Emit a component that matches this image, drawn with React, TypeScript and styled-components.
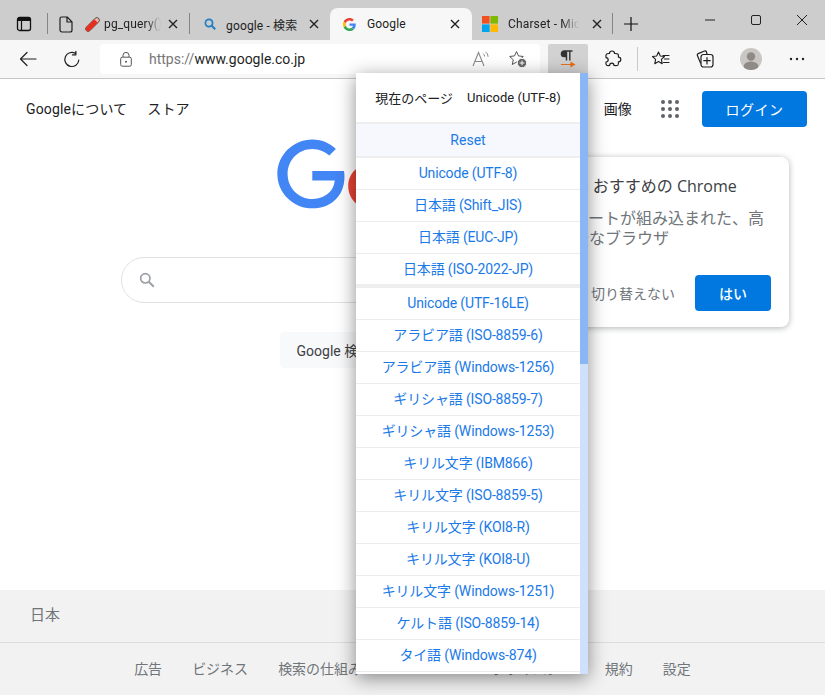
import React from "react";
import styled, { createGlobalStyle } from "styled-components";

const GlobalStyle = createGlobalStyle`
    html, body {
        margin: 0;
        padding: 0;
        background: #fff;
    }
    body {
        font-family: Roboto, "Noto Sans CJK JP", sans-serif;
        overflow: hidden;
    }
`;

const Shell = styled.div`
    position: relative;
    width: 825px;
    height: 695px;
    overflow: hidden;
    display: flex;
    flex-direction: column;
`;

/* tab strip */
const TabStrip = styled.div`
    height: 40px;
    flex: none;
    display: flex;
    align-items: flex-end;
    background: #cdcdcd;
`;
const StripCell = styled.div<{ $w: number }>`
    width: ${(p) => p.$w}px;
    height: 32px;
    flex: none;
    display: flex;
    align-items: center;
    justify-content: center;
`;
const StripDivider = styled.div`
    width: 1px;
    height: 21px;
    margin-bottom: 6px;
    flex: none;
    background: #858585;
`;
const Tab = styled.div<{ $w: number; $pl: number; $pr: number; $gap: number; $active?: boolean }>`
    width: ${(p) => p.$w}px;
    height: 32px;
    flex: none;
    box-sizing: border-box;
    display: flex;
    align-items: center;
    gap: ${(p) => p.$gap}px;
    padding: 0 ${(p) => p.$pr}px 0 ${(p) => p.$pl}px;
    border-radius: 8px 8px 0 0;
    background: ${(p) => (p.$active ? "#f7f7f7" : "transparent")};
`;
const Favicon = styled.span`
    width: 16px;
    height: 16px;
    flex: none;
    display: flex;
    align-items: center;
    justify-content: center;
`;
const TabTitle = styled.span<{ $fade?: boolean }>`
    flex: 1;
    min-width: 0;
    overflow: hidden;
    white-space: nowrap;
    font-size: 12px;
    letter-spacing: 0.15px;
    color: #222;
    ${(p) =>
        p.$fade &&
        `-webkit-mask-image: linear-gradient(to right, #000 75%, transparent 100%);
         mask-image: linear-gradient(to right, #000 75%, transparent 100%);`}
`;
const CloseSlot = styled.span`
    width: 16px;
    height: 16px;
    flex: none;
    display: flex;
    align-items: center;
    justify-content: center;
`;
const PlusCell = styled.div`
    width: 36px;
    height: 32px;
    flex: none;
    display: flex;
    align-items: center;
    justify-content: center;
`;
const WindowControls = styled.div`
    margin-left: auto;
    display: flex;
    align-self: flex-start;
`;
const WindowButton = styled.div`
    width: 46px;
    height: 40px;
    display: flex;
    align-items: center;
    justify-content: center;
`;

/* toolbar */
const Toolbar = styled.div`
    height: 39px;
    flex: none;
    box-sizing: border-box;
    display: flex;
    align-items: center;
    padding-left: 8px;
    background: #f7f7f7;
    border-bottom: 1px solid #c6c6c6;
`;
const ToolButton = styled.div<{ $ml?: number }>`
    width: 40px;
    height: 30px;
    flex: none;
    margin-left: ${(p) => p.$ml ?? 0}px;
    display: flex;
    align-items: center;
    justify-content: center;
`;
const ActiveToolButton = styled(ToolButton)`
    background: #d2d2d2;
    border-radius: 2px 2px 0 0;
`;
const ToolDivider = styled.div`
    width: 1px;
    height: 24px;
    flex: none;
    margin-left: 4px;
    background: #c9c9c9;
`;
const AddressBar = styled.div`
    width: 440px;
    height: 30px;
    flex: none;
    box-sizing: border-box;
    margin-left: 8px;
    padding: 0 13px 0 20px;
    display: flex;
    align-items: center;
    border-radius: 4px;
    background: #fff;
`;
const Url = styled.div`
    margin-left: 17px;
    font-size: 14px;
    color: #1f1f1f;
    flex: 1;
    span {
        color: #767676;
    }
`;
const AddressIcons = styled.div`
    display: flex;
    align-items: center;
    gap: 19px;
`;

/* google page */
const Page = styled.main`
    flex: 1;
    min-height: 0;
    display: flex;
    flex-direction: column;
    background: #fff;
`;
const TopNav = styled.nav`
    display: flex;
    align-items: center;
    justify-content: space-between;
    padding: 12px 18px 0 26px;
`;
const NavGroup = styled.div`
    display: flex;
    align-items: center;
    gap: 20px;
`;
const NavRight = styled(NavGroup)`
    gap: 15px;
`;
const NavLink = styled.a`
    font-size: 14px;
    letter-spacing: 0.15px;
    padding-bottom: 2px;
    color: #202124;
`;
const AppsButton = styled.div`
    margin: 0 8px 0 14px;
    display: flex;
`;
const LoginButton = styled.button`
    width: 105px;
    height: 36px;
    border: 0;
    border-radius: 4px;
    background: #0078e0;
    color: #fff;
    font: inherit;
    font-size: 14px;
    letter-spacing: 0.5px;
`;
const Logo = styled.div`
    align-self: flex-start;
    margin: 12px 0 0 277px;
    height: 92px;
    display: flex;
`;
const SearchBox = styled.div`
    width: 584px;
    height: 46px;
    box-sizing: border-box;
    margin: 26px 0 0 121px;
    padding-left: 17px;
    display: flex;
    align-items: center;
    border: 1px solid #dfe1e5;
    border-radius: 23px;
    background: #fff;
`;
const SearchButtons = styled.div`
    margin-top: 29px;
    display: flex;
    justify-content: center;
    gap: 16px;
`;
const SearchButton = styled.button`
    height: 36px;
    padding: 0 17px;
    border: 0;
    border-radius: 4px;
    background: #f8f9fa;
    color: #3c4043;
    font: inherit;
    font-size: 14px;
`;
const Footer = styled.footer`
    margin-top: auto;
    height: 105px;
    background: #f2f2f2;
    color: #70757a;
    font-size: 14px;
`;
const FooterCountry = styled.div`
    height: 53px;
    box-sizing: border-box;
    padding: 0 0 5px 30px;
    display: flex;
    align-items: center;
    font-size: 15px;
    border-bottom: 1px solid #dadce0;
`;
const FooterLinks = styled.div`
    padding-top: 15px;
    display: flex;
    justify-content: center;
    gap: 129px;
`;
const FooterGroup = styled.div`
    display: flex;
    gap: 30px;
`;

/* chrome promo */
const PromoCard = styled.aside`
    position: absolute;
    top: 157px;
    left: 507px;
    width: 282px;
    height: 170px;
    box-sizing: border-box;
    padding: 19px 18px 16px 18px;
    display: flex;
    flex-direction: column;
    background: #fff;
    border-radius: 8px;
    box-shadow: 0 1px 6px rgba(60, 64, 67, 0.4);
`;
const PromoTitle = styled.div`
    padding-left: 11px;
    font-family: "Open Sans", "Noto Sans CJK JP", sans-serif;
    font-size: 16px;
    line-height: 20px;
    white-space: nowrap;
    color: #3c4043;
`;
const PromoBody = styled.div`
    margin-top: 13px;
    font-size: 16px;
    line-height: 20px;
    color: #70757a;
    white-space: nowrap;
`;
const PromoActions = styled.div`
    margin-top: auto;
    display: flex;
    align-items: center;
    justify-content: flex-end;
    gap: 20px;
    font-size: 14px;
    color: #70757a;
`;
const PromoYes = styled.button`
    width: 76px;
    height: 36px;
    border: 0;
    border-radius: 4px;
    background: #0078e0;
    color: #fff;
    font: inherit;
    font-size: 14px;
    font-weight: 500;
`;

/* charset menu */
const CharsetMenu = styled.div`
    position: absolute;
    top: 73px;
    left: 356px;
    width: 232px;
    height: 601px;
    display: flex;
    overflow: hidden;
    background: #fff;
    box-shadow: 0 4px 18px rgba(0, 0, 0, 0.45);
`;
const MenuList = styled.div`
    flex: 1;
    min-width: 0;
    font-size: 14px;
    letter-spacing: -0.15px;
    color: #1a7ae8;
    text-align: center;
`;
const MenuHeader = styled.div`
    height: 49px;
    display: flex;
    align-items: center;
    justify-content: center;
    gap: 14px;
    font-size: 13px;
    letter-spacing: 0;
    color: #202124;
`;
const MenuRow = styled.div<{ $last?: boolean; $reset?: boolean }>`
    height: ${(p) => (p.$last ? 30 : 31)}px;
    line-height: 31px;
    border-bottom: ${(p) => (p.$last || p.$reset ? "0" : "1px solid #ececec")};
    background: ${(p) => (p.$reset ? "#f6f8fd" : "transparent")};
    ${(p) => p.$reset && "height: 32px; line-height: 32px; letter-spacing: 0;"}
`;
const MenuSeparator = styled.div<{ $h: number }>`
    height: ${(p) => p.$h}px;
    background: #eeeeee;
`;
const ScrollTrack = styled.div`
    width: 8px;
    flex: none;
    background: #cfe0fb;
`;
const ScrollThumb = styled.div`
    height: 291px;
    background: #8ab6f6;
`;

const Stroke = { fill: "none", stroke: "#1f1f1f", strokeWidth: 1.2, strokeLinecap: "round", strokeLinejoin: "round" } as const;

const CloseIcon = () => (
    <svg width="10" height="10" viewBox="0 0 10 10">
        <path d="M1 1l8 8M9 1L1 9" stroke="#222" strokeWidth="1.4" fill="none" />
    </svg>
);

const GoogleG = () => (
    <svg width="13" height="13" viewBox="0 0 48 48">
        <path fill="#EA4335" d="M24 9.5c3.54 0 6.71 1.22 9.21 3.6l6.85-6.85C35.9 2.38 30.47 0 24 0 14.62 0 6.51 5.38 2.56 13.22l7.98 6.19C12.43 13.72 17.74 9.5 24 9.5z" />
        <path fill="#4285F4" d="M46.98 24.55c0-1.57-.15-3.09-.38-4.55H24v9.02h12.94c-.58 2.96-2.26 5.48-4.78 7.18l7.73 6c4.51-4.18 7.09-10.36 7.09-17.65z" />
        <path fill="#FBBC05" d="M10.53 28.59c-.48-1.45-.76-2.99-.76-4.59s.27-3.14.76-4.59l-7.98-6.19C.92 16.46 0 20.12 0 24c0 3.88.92 7.54 2.56 10.78l7.97-6.19z" />
        <path fill="#34A853" d="M24 48c6.48 0 11.93-2.13 15.89-5.81l-7.73-6c-2.15 1.45-4.92 2.3-8.16 2.3-6.26 0-11.57-4.22-13.47-9.91l-7.98 6.19C6.51 42.62 14.62 48 24 48z" />
    </svg>
);

const GoogleLogo = () => (
    <svg width="272" height="92" viewBox="0 0 272 92">
        <path fill="#EA4335" d="M115.75 47.18c0 12.77-9.99 22.18-22.25 22.18s-22.25-9.41-22.25-22.18C71.25 34.32 81.24 25 93.5 25s22.25 9.32 22.25 22.18zm-9.74 0c0-7.98-5.79-13.44-12.51-13.44S80.99 39.2 80.99 47.18c0 7.9 5.79 13.44 12.51 13.44s12.51-5.55 12.51-13.44z" />
        <path fill="#4285F4" d="M35.29 41.41V32H67c.31 1.64.47 3.58.47 5.68 0 7.06-1.93 15.79-8.15 22.01-6.05 6.3-13.78 9.66-24.02 9.66C16.32 69.35.36 53.89.36 34.91.36 15.93 16.32.47 35.3.47c10.5 0 17.98 4.12 23.6 9.49l-6.64 6.64c-4.03-3.78-9.49-6.72-16.97-6.72-13.86 0-24.7 11.17-24.7 25.03 0 13.86 10.84 25.03 24.7 25.03 8.99 0 14.11-3.61 17.39-6.89 2.66-2.66 4.41-6.46 5.1-11.65l-22.49.01z" />
    </svg>
);

const AppsIcon = () => (
    <svg width="18" height="18" viewBox="0 0 18 18" fill="#5f6368">
        {[2, 9, 16].flatMap((cy) =>
            [2, 9, 16].map((cx) => <circle key={`${cx}-${cy}`} cx={cx} cy={cy} r="2" />)
        )}
    </svg>
);

const encodingGroups = [
    ["Unicode (UTF-8)", "日本語 (Shift_JIS)", "日本語 (EUC-JP)", "日本語 (ISO-2022-JP)"],
    [
        "Unicode (UTF-16LE)",
        "アラビア語 (ISO-8859-6)",
        "アラビア語 (Windows-1256)",
        "ギリシャ語 (ISO-8859-7)",
        "ギリシャ語 (Windows-1253)",
        "キリル文字 (IBM866)",
        "キリル文字 (ISO-8859-5)",
        "キリル文字 (KOI8-R)",
        "キリル文字 (KOI8-U)",
        "キリル文字 (Windows-1251)",
        "ケルト語 (ISO-8859-14)",
        "タイ語 (Windows-874)",
    ],
];

function App() {
    return (
        <Shell>
            <GlobalStyle />
            <TabStrip>
                <StripCell $w={47}>
                    <svg width="16" height="16" viewBox="0 0 16 16">
                        <rect x="1.5" y="1.5" width="13" height="13" rx="2" fill="none" stroke="#111" strokeWidth="1.3" />
                        <path d="M1.5 3.5a2 2 0 0 1 2-2h9a2 2 0 0 1 2 2v1.5h-13z" fill="#111" />
                        <path d="M5.5 5v9.5" stroke="#111" strokeWidth="1.2" />
                    </svg>
                </StripCell>
                <StripDivider />
                <StripCell $w={36}>
                    <svg width="14" height="17" viewBox="0 0 14 17">
                        <path d="M2.5 1h5.7L13 5.8V14a2 2 0 0 1-2 2H3a2 2 0 0 1-2-2V2.5A1.5 1.5 0 0 1 2.5 1zM8 1v5h5" {...Stroke} />
                    </svg>
                </StripCell>
                <Tab $w={105} $pl={0} $pr={8} $gap={4}>
                    <Favicon>
                        <svg width="15" height="15" viewBox="0 0 15 15">
                            <g transform="rotate(45 7.5 7.5)">
                                <rect x="5" y="-1.2" width="5" height="17.4" rx="2.5" fill="#f3b3a8" stroke="#3a3a3a" strokeWidth="0.8" />
                                <path d="M5 2.5h5v11a2.5 2.5 0 0 1-5 0z" fill="#e5301f" />
                            </g>
                        </svg>
                    </Favicon>
                    <TabTitle $fade>pg_query()</TabTitle>
                    <CloseSlot><CloseIcon /></CloseSlot>
                </Tab>
                <StripDivider />
                <Tab $w={140} $pl={12} $pr={8} $gap={8}>
                    <Favicon>
                        <svg width="12" height="12" viewBox="0 0 12 12">
                            <circle cx="5" cy="5" r="3.6" fill="none" stroke="#1f7fc4" strokeWidth="1.7" />
                            <path d="M7.8 7.8l3.4 3.4" stroke="#1f7fc4" strokeWidth="2" />
                        </svg>
                    </Favicon>
                    <TabTitle>google - 検索</TabTitle>
                    <CloseSlot><CloseIcon /></CloseSlot>
                </Tab>
                <Tab $w={142} $pl={11} $pr={9} $gap={10} $active>
                    <Favicon><GoogleG /></Favicon>
                    <TabTitle>Google</TabTitle>
                    <CloseSlot><CloseIcon /></CloseSlot>
                </Tab>
                <Tab $w={140} $pl={10} $pr={7} $gap={10}>
                    <Favicon>
                        <svg width="16" height="16" viewBox="0 0 16 16">
                            <rect width="7.6" height="7.6" fill="#f25022" />
                            <rect x="8.4" width="7.6" height="7.6" fill="#7fba00" />
                            <rect y="8.4" width="7.6" height="7.6" fill="#00a4ef" />
                            <rect x="8.4" y="8.4" width="7.6" height="7.6" fill="#ffb900" />
                        </svg>
                    </Favicon>
                    <TabTitle $fade>Charset - Micr</TabTitle>
                    <CloseSlot><CloseIcon /></CloseSlot>
                </Tab>
                <StripDivider />
                <PlusCell>
                    <svg width="16" height="16" viewBox="0 0 16 16">
                        <path d="M8 1v14M1 8h14" stroke="#111" strokeWidth="1.2" />
                    </svg>
                </PlusCell>
                <WindowControls>
                    <WindowButton>
                        <svg width="12" height="12" viewBox="0 0 12 12"><path d="M1 6h10" stroke="#222" strokeWidth="1" /></svg>
                    </WindowButton>
                    <WindowButton>
                        <svg width="12" height="12" viewBox="0 0 12 12"><rect x="1.5" y="1.5" width="9" height="9" rx="1.5" fill="none" stroke="#222" strokeWidth="1" /></svg>
                    </WindowButton>
                    <WindowButton>
                        <svg width="12" height="12" viewBox="0 0 12 12"><path d="M1 1l10 10M11 1L1 11" stroke="#222" strokeWidth="1" /></svg>
                    </WindowButton>
                </WindowControls>
            </TabStrip>

            <Toolbar>
                <ToolButton>
                    <svg width="18" height="16" viewBox="0 0 18 16">
                        <path d="M17 8H1.5M8 1.5L1.5 8 8 14.5" {...Stroke} />
                    </svg>
                </ToolButton>
                <ToolButton $ml={4}>
                    <svg width="18" height="18" viewBox="0 0 18 18">
                        <path d="M15.8 9.5A7 7 0 1 1 12.6 3.1M12.9 0.8v3.5h-3.5" {...Stroke} transform="translate(0 .5)" />
                    </svg>
                </ToolButton>
                <AddressBar>
                    <svg width="12" height="15" viewBox="0 0 12 15">
                        <rect x="0.7" y="5.2" width="10.6" height="9" rx="1.5" fill="none" stroke="#555" strokeWidth="1" />
                        <path d="M3 5V3.4a3 3 0 0 1 6 0V5" fill="none" stroke="#555" strokeWidth="1" />
                        <circle cx="6" cy="9.7" r="1" fill="#555" />
                    </svg>
                    <Url><span>https://</span>www.google.co.jp</Url>
                    <AddressIcons>
                        <svg width="18" height="16" viewBox="0 0 18 16">
                            <path d="M1 15L6.5 1.5 12 15M2.8 10.5h7.4" fill="none" stroke="#8a8a8a" strokeWidth="1.1" />
                            <path d="M11 2.5a3.5 3.5 0 0 1 1.6 3M13.5.8a6 6 0 0 1 2.6 5" fill="none" stroke="#8a8a8a" strokeWidth="1" />
                        </svg>
                        <svg width="18" height="18" viewBox="0 0 18 18">
                            <path d="M7.5 1.5l2 4.4 4.8.6-3.6 3.3 1 4.7-4.2-2.4-4.2 2.4 1-4.7L.7 6.5l4.8-.6z" fill="none" stroke="#555" strokeWidth="1" strokeLinejoin="round" />
                            <circle cx="13" cy="13" r="4.7" fill="#666" stroke="#fff" strokeWidth="1" />
                            <path d="M13 10.6v4.8M10.6 13h4.8" stroke="#fff" strokeWidth="1" />
                        </svg>
                    </AddressIcons>
                </AddressBar>
                <ActiveToolButton $ml={8}>
                    <svg width="16" height="18" viewBox="0 0 16 18">
                        <path d="M6.5 1H4.2a2.7 2.7 0 0 0 0 5.6h2.3zM6.5 1H12.5M6.5 1v9.5M9.8 1v9.5" fill="#333" stroke="#333" strokeWidth="1.4" />
                        <path d="M1 14.5h12M11 12.5l3.4 2-3.4 2z" fill="#e8701a" stroke="#e8701a" strokeWidth="1.2" />
                    </svg>
                </ActiveToolButton>
                <ToolButton $ml={5}>
                    <svg width="18" height="18" viewBox="0 0 18 18">
                        <path d="M6.5 3.5a2.5 2.5 0 0 1 5 0c1.8-.1 3 .1 3.5.6.4.5.5 1.5.4 3a2.4 2.4 0 0 1 0 4.8c.1 1.6 0 2.7-.5 3.2-.6.5-2 .7-3.9.4-.1-1.5-1-2.3-2.2-2.3s-2.1.8-2.2 2.3c-1.6.2-2.6.1-3.1-.4-.5-.5-.7-1.6-.5-3.1 1.4-.1 2.2-1 2.2-2.2s-.8-2.1-2.2-2.2c-.2-1.7 0-2.9.5-3.4.6-.6 1.6-.8 3-.7z" {...Stroke} transform="translate(-1 0)" />
                    </svg>
                </ToolButton>
                <ToolDivider />
                <ToolButton $ml={3}>
                    <svg width="18" height="16" viewBox="0 0 18 16">
                        <path d="M6.5 1l1.8 4 4.2.5-3.1 2.9.8 4.3-3.7-2.1-3.7 2.1.8-4.3L.5 5.5l4.2-.5z" {...Stroke} strokeWidth="1.1" />
                        <path d="M11 4.5h6M12.5 8h4.5M11.5 11.5H17" {...Stroke} strokeWidth="1.1" />
                    </svg>
                </ToolButton>
                <ToolButton $ml={4}>
                    <svg width="18" height="18" viewBox="0 0 18 18">
                        <path d="M4.5 13L1.4 5.6a1.5 1.5 0 0 1 .8-2L8.5 1a1.5 1.5 0 0 1 1.9.8L11 4" {...Stroke} />
                        <rect x="5" y="4.5" width="12" height="12.5" rx="2.5" {...Stroke} />
                        <path d="M11 7.5v6.5M7.8 10.7h6.4" {...Stroke} />
                    </svg>
                </ToolButton>
                <ToolButton $ml={6}>
                    <svg width="22" height="22" viewBox="0 0 22 22">
                        <defs>
                            <clipPath id="avatar"><circle cx="11" cy="11" r="11" /></clipPath>
                        </defs>
                        <circle cx="11" cy="11" r="11" fill="#c9c6c3" />
                        <g clipPath="url(#avatar)" fill="#8e8a86">
                            <circle cx="11" cy="8.5" r="4.2" />
                            <ellipse cx="11" cy="19" rx="7.5" ry="5.5" />
                        </g>
                    </svg>
                </ToolButton>
                <ToolButton $ml={6}>
                    <svg width="16" height="4" viewBox="0 0 16 4" fill="#222">
                        <circle cx="2" cy="2" r="1.2" />
                        <circle cx="8" cy="2" r="1.2" />
                        <circle cx="14" cy="2" r="1.2" />
                    </svg>
                </ToolButton>
            </Toolbar>

            <Page>
                <TopNav>
                    <NavGroup>
                        <NavLink>Googleについて</NavLink>
                        <NavLink>ストア</NavLink>
                    </NavGroup>
                    <NavRight>
                        <NavLink>Gmail</NavLink>
                        <NavLink>画像</NavLink>
                        <AppsButton><AppsIcon /></AppsButton>
                        <LoginButton>ログイン</LoginButton>
                    </NavRight>
                </TopNav>
                <Logo><GoogleLogo /></Logo>
                <SearchBox>
                    <svg width="16" height="16" viewBox="0 0 16 16">
                        <circle cx="6.3" cy="6.3" r="4.7" fill="none" stroke="#9aa0a6" strokeWidth="1.7" />
                        <path d="M9.8 9.8l5 5" stroke="#9aa0a6" strokeWidth="2" />
                    </svg>
                </SearchBox>
                <SearchButtons>
                    <SearchButton>Google 検索</SearchButton>
                    <SearchButton>I'm Feeling Lucky</SearchButton>
                </SearchButtons>
                <Footer>
                    <FooterCountry>日本</FooterCountry>
                    <FooterLinks>
                        <FooterGroup>
                            <span>広告</span>
                            <span>ビジネス</span>
                            <span>検索の仕組み</span>
                        </FooterGroup>
                        <FooterGroup>
                            <span>プライバシー</span>
                            <span>規約</span>
                            <span>設定</span>
                        </FooterGroup>
                    </FooterLinks>
                </Footer>
            </Page>

            <PromoCard>
                <PromoTitle>Google おすすめの Chrome</PromoTitle>
                <PromoBody>
                    セーフゲートが組み込まれた、高
                    <br />
                    速で安全なブラウザ
                </PromoBody>
                <PromoActions>
                    <span>切り替えない</span>
                    <PromoYes>はい</PromoYes>
                </PromoActions>
            </PromoCard>

            <CharsetMenu>
                <MenuList>
                    <MenuHeader>
                        <span>現在のページ</span>
                        <span>Unicode (UTF-8)</span>
                    </MenuHeader>
                    <MenuSeparator $h={2} />
                    <MenuRow $reset>Reset</MenuRow>
                    <MenuSeparator $h={2} />
                    {encodingGroups[0].map((name, i) => (
                        <MenuRow key={name} $last={i === 3}>{name}</MenuRow>
                    ))}
                    <MenuSeparator $h={4} />
                    {encodingGroups[1].map((name) => (
                        <MenuRow key={name}>{name}</MenuRow>
                    ))}
                </MenuList>
                <ScrollTrack>
                    <ScrollThumb />
                </ScrollTrack>
            </CharsetMenu>
        </Shell>
    );
}

export default App;
